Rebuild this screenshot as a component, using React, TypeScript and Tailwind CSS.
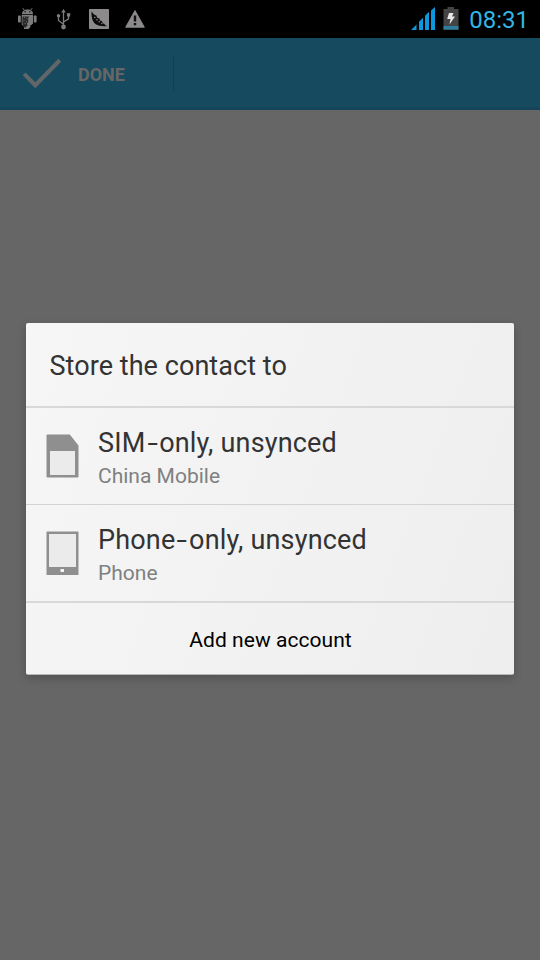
import type { ReactNode } from "react";

function RobotIcon() {
  return (
    <svg width="20" height="22" viewBox="0 0 20 22" fill="#7d7d7d">
      <path d="M4.8 0.2l1.4 1.8M14.2 0.2l-1.4 1.8" stroke="#7d7d7d" strokeWidth="1" />
      <path d="M4 6C4 3 6.3 1.4 9.5 1.4S15 3 15 6z" />
      <rect x="6.6" y="3.2" width="1.2" height="1.2" fill="#000" />
      <rect x="11.2" y="3.2" width="1.2" height="1.2" fill="#000" />
      <rect x="0" y="7.5" width="2.8" height="7" rx=".8" />
      <rect x="15.8" y="7.5" width="2.8" height="7" rx=".8" />
      <path d="M3.7 6.8H15v8.7l-1.6 1.5h-1v2L10.5 21H6v-2.5l-2.300-2z" />
      <path d="M4.500 8.500h6.500l-1 2.500.5 2.500-1.500 2 .5 2-2 2H6L4.500 16z" fill="#2a2a2a" />
      <path d="M6 9.500h1M8.500 10.500h1M5.500 12.500h1M8 13.500h1M6.500 15.500h1" stroke="#777" strokeWidth=".8" />
    </svg>
  );
}

function UsbIcon() {
  return (
    <svg width="15" height="21" viewBox="0 0 15 21" fill="#7d7d7d">
      <path d="M7.5 0l2.3 3.6H5.2z" />
      <path d="M7.5 3v15M7.5 15.200L2.500 11.500V7M7.500 13l5-3.200V6" fill="none" stroke="#7d7d7d" strokeWidth="1.3" />
      <circle cx="2.5" cy="6.8" r="1.7" />
      <rect x="10.9" y="4.2" width="3.300" height="3.300" />
      <circle cx="7.5" cy="18" r="2.4" />
    </svg>
  );
}

function PeaPodIcon() {
  return (
    <svg width="20" height="20" viewBox="0 0 20 20">
      <rect width="20" height="20" rx=".8" fill="#8c8a8b" />
      <path d="M2.600 2.200C2.200 7 3.200 12.500 6.500 15c3 2.200 8 2.500 12 2-2-.3-2.700-1-3.200-2.300l-1.600-.5-.6-2-2-.8-.8-2-2.200-.6-.7-2.200C5 6 4 4.500 2.600 2.200z" fill="#0c0c0c" />
      <g fill="#8c8a8b">
        <circle cx="5.8" cy="8.5" r=".8" />
        <circle cx="8" cy="10.7" r=".8" />
        <circle cx="10.3" cy="12.7" r=".8" />
        <circle cx="12.8" cy="14.5" r=".7" />
      </g>
    </svg>
  );
}

function WarningIcon() {
  return (
    <svg width="20" height="18" viewBox="0 0 20 18">
      <path d="M10 .6L19.3 17.2H.7z" fill="#8c8a8b" stroke="#8c8a8b" strokeWidth="1" strokeLinejoin="round" />
      <path d="M8.8 5.500h2.400v6H8.800zM8.800 13h2.400v2.300H8.800z" fill="#111" />
    </svg>
  );
}

function SignalIcon() {
  return (
    <svg width="24" height="23" viewBox="0 0 24 23" fill="#0c98dd">
      <path d="M0 23l5.500-5.500V23zM8 23v-8.300l4-4V23zM14 23V8.800l4-4V23zM20 23V3.500L24 0v23z" />
    </svg>
  );
}

function BatteryIcon() {
  return (
    <svg width="16" height="23" viewBox="0 0 16 23">
      <path d="M4.500 0h6.500v2H15.500v21H.5V2h4z" fill="#444" />
      <path d="M.5 19h15v3.500H.5z" fill="#2a7d9c" />
      <path d="M6 6h4.500L9 9.500h3L6.500 17.500l1-5.500H4.200z" fill="#e8e8e8" />
    </svg>
  );
}

function SimIcon() {
  return (
    <svg width="33" height="44" viewBox="0 0 33 44">
      <path d="M1.500.5h22.300L32.500 11.500V42.500a1 1 0 0 1-1 1h-30a1 1 0 0 1-1-1v-41a1 1 0 0 1 1-1z" fill="#8f8f8f" />
      <rect x="4" y="17" width="25" height="24" fill="#ebebeb" />
    </svg>
  );
}

function PhoneIcon() {
  return (
    <svg width="33" height="44" viewBox="0 0 33 44">
      <rect x=".5" y=".5" width="32" height="43.5" rx=".5" fill="#8f8f8f" />
      <rect x="3" y="3" width="27" height="33" fill="#ebebeb" />
      <rect x="14.5" y="38" width="3.5" height="3" fill="#f5f5f5" />
    </svg>
  );
}

type AccountRowProps = {
  icon: ReactNode;
  kind: string;
  subtitle: string;
};

function AccountRow({ icon, kind, subtitle }: AccountRowProps) {
  return (
    <button className="flex h-24 w-full items-center gap-[19px] pl-5 text-left">
      {icon}
      <div className="pt-[7px]">
        <div className="text-[27px] leading-8 tracking-[0.18px] text-[#333]">
          {kind}
          <span className="mx-[3px] inline-block scale-x-140">-</span>
          only, unsynced
        </div>
        <div className="mt-px text-[21px] leading-8 text-[#808080]">{subtitle}</div>
      </div>
    </button>
  );
}

export default function App() {
  return (
    <div className="flex h-[960px] w-[540px] flex-col overflow-hidden bg-[#666] font-['Roboto',sans-serif]">
      {/* Status bar */}
      <div className="flex h-[38px] shrink-0 justify-between bg-black">
        <div className="flex pl-[18px]">
          <div className="mt-2 w-[38px]"><RobotIcon /></div>
          <div className="mt-[9px] w-[33px]"><UsbIcon /></div>
          <div className="mt-[9px] w-9"><PeaPodIcon /></div>
          <div className="mt-[10px]"><WarningIcon /></div>
        </div>
        <div className="flex pr-[11px]">
          <div className="mt-[7px] mr-2"><SignalIcon /></div>
          <div className="mt-[7px] mr-[10px]"><BatteryIcon /></div>
          <span className="mt-1 text-[24px] leading-8 text-[#33b5e5]">08:31</span>
        </div>
      </div>

      {/* Action bar */}
      <div className="flex h-[72px] shrink-0 items-center border-b-3 border-[#144459] bg-[#164a5f]">
        <svg className="mt-[3px] ml-[22px]" width="40" height="32" viewBox="22 58 40 32">
          <path d="M22.7 75.3l2.8-2.9 9.8 9.8 23-23.5 2.900 3-25.900 26.600z" fill="#616668" />
        </svg>
        <span className="mt-[5px] ml-4 w-[95px] text-[18px] leading-6 font-bold text-[#666]">DONE</span>
        <div className="h-9 w-px bg-[#12405a]" />
      </div>

      {/* Dialog */}
      <div className="mx-[26px] mt-[213px] flex h-[352px] shrink-0 flex-col rounded-[2px] border-b border-[#b5b8b7] bg-linear-110 from-[#f6f6f6] to-[#eeeeee] shadow-[0_3px_10px_rgba(0,0,0,0.22)]">
        <h1 className="h-[83px] pt-[27px] pl-[23.5px] text-[27px] leading-8 font-normal tracking-[0.06px] text-[#333]">
          Store the contact to
        </h1>
        <div className="h-0.5 bg-[#d8d8d8]" />
        <AccountRow icon={<SimIcon />} kind="SIM" subtitle="China Mobile" />
        <div className="h-px bg-[#d3d3d3]" />
        <AccountRow icon={<PhoneIcon />} kind="Phone" subtitle="Phone" />
        <div className="h-0.5 bg-[#d8d8d8]" />
        <button className="flex-1 pt-[5px] pl-px text-[21px] tracking-[0.05px] text-black">Add new account</button>
      </div>
    </div>
  );
}
